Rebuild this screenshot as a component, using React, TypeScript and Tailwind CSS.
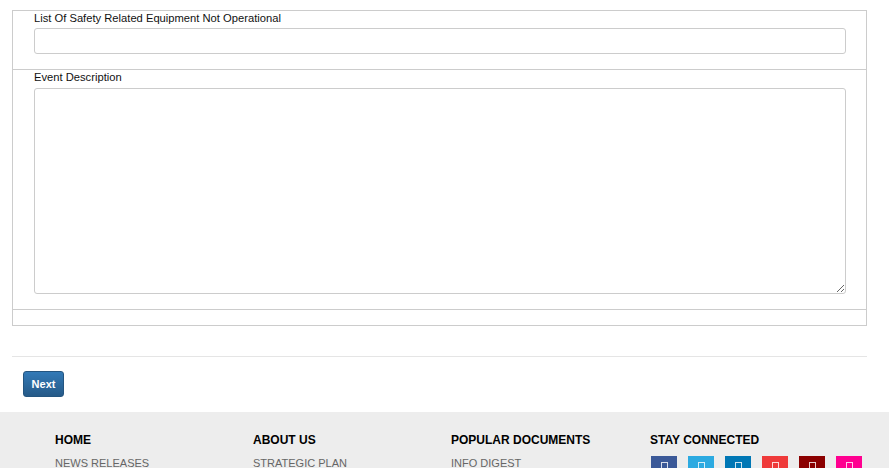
export default function App() {
  const social = ['bg-[#3b5998]', 'bg-[#2caae1]', 'bg-[#0077b5]', 'bg-[#ef3a3a]', 'bg-[#8b0000]', 'bg-[#ff0090]']

  return (
    <div className="h-screen overflow-hidden bg-white font-['Liberation_Sans',Arial,sans-serif] text-[#333]">
      <div className="pl-3 pr-[22px] pt-2.5">
        {/* Form box */}
        <div className="border border-[#ccc]">
          <div className="pl-[21px] pr-[20px] pb-[15px] border-b border-[#ccc]">
            <label className="block text-[11.2px] leading-[15px] text-[#111]">
              List Of Safety Related Equipment Not Operational
            </label>
            <input
              type="text"
              className="mt-[2px] block w-full h-[26px] border border-[#ccc] rounded-[3px] bg-white"
            />
          </div>
          <div className="pl-[21px] pr-[20px] pb-[15px] border-b border-[#ccc]">
            <label className="block text-[11.2px] leading-[15px] text-[#111]">Event Description</label>
            <textarea className="mt-[3px] block w-full h-[206px] border border-[#ccc] rounded-[3px] bg-white" />
          </div>
          <div className="h-[15px]" />
        </div>

        <div className="mt-[30px] border-t border-[#e5e5e5]" />

        <div className="pl-[11px] mt-[14px]">
          <button className="h-[26px] w-[41px] rounded-[3px] border border-[#245580] bg-gradient-to-b from-[#337ab7] to-[#265a88] text-white text-[11px] font-bold">
            Next
          </button>
        </div>
      </div>

      {/* Footer */}
      <div className="mt-[15px] bg-[#ededed] pl-[55px] pt-[21px] pb-6">
        <div className="flex">
          <div className="w-[198px]">
            <h4 className="text-[12px] font-bold leading-[14px] text-black">HOME</h4>
            <p className="mt-[10px] text-[11px] leading-[13px] text-[#666]">NEWS RELEASES</p>
          </div>
          <div className="w-[198px]">
            <h4 className="text-[12px] font-bold leading-[14px] text-black">ABOUT US</h4>
            <p className="mt-[10px] text-[11px] leading-[13px] text-[#666]">STRATEGIC PLAN</p>
          </div>
          <div className="w-[199px]">
            <h4 className="text-[12px] font-bold leading-[14px] text-black">POPULAR DOCUMENTS</h4>
            <p className="mt-[10px] text-[11px] leading-[13px] text-[#666]">INFO DIGEST</p>
          </div>
          <div>
            <h4 className="text-[12px] font-bold leading-[14px] text-black">STAY CONNECTED</h4>
            <div className="mt-[9px] ml-[1px] flex gap-[11px]">
              {social.map((c) => (
                <span key={c} className={`${c} w-[26px] h-[26px] flex justify-center pt-[6px]`}>
                  <span className="block w-[7px] h-[12px] border border-white/80" />
                </span>
              ))}
            </div>
          </div>
        </div>
      </div>
    </div>
  )
}
